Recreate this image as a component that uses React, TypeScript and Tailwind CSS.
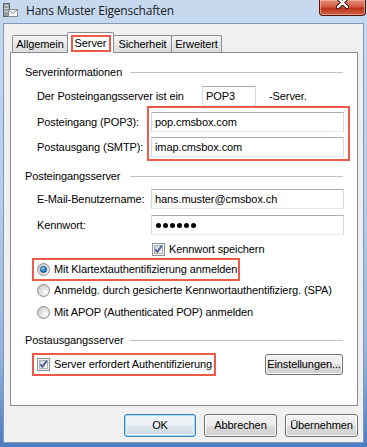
import type { ReactNode } from 'react';

const boxBorder =
  'border border-[#abadb3] border-l-[#d5d8df] border-r-[#d5d8df] border-b-[#e3e9ef] bg-white';

const btnClass =
  'flex items-center justify-center rounded-[3px] border border-[#707070] bg-[linear-gradient(to_bottom,#f2f2f2_0%,#ebebeb_50%,#dddddd_50%,#cfcfcf_100%)] shadow-[inset_0_0_0_1px_#fcfcfc]';

const red = 'border-2 border-[#ec5b47]';

function TitleIcon() {
  return (
    <svg width="16" height="16" viewBox="0 0 16 16">
      <rect x="1.5" y="1.5" width="6" height="13" fill="#9a9da2" stroke="#5f6267" />
      <rect x="2.5" y="3" width="4" height="1" fill="#d8dadd" />
      <rect x="2.5" y="6" width="4" height="1" fill="#d8dadd" />
      <rect x="2.5" y="9" width="4" height="1" fill="#d8dadd" />
      <rect x="6.5" y="7.5" width="9" height="7" fill="#f6f6f6" stroke="#8a8c90" />
      <path d="M6.5 7.5 L11 11.5 L15.5 7.5" fill="none" stroke="#8a8c90" />
    </svg>
  );
}

function CloseButton() {
  return (
    <div className="ml-auto mr-[1px] self-start w-[47px] h-[16px] rounded-b-[4px] border border-t-0 border-[#4f1509] bg-[linear-gradient(to_bottom,#e2907c_0%,#d25a40_45%,#bb3119_55%,#d0644a_100%)] shadow-[inset_0_0_0_1px_rgba(255,190,170,0.6)] flex justify-center">
      <svg width="13" height="9" viewBox="0 4 13 9">
        <path d="M2 2 L11 11 M11 2 L2 11" stroke="#3a1a14" strokeWidth="4.4" strokeLinecap="round" />
        <path d="M2 2 L11 11 M11 2 L2 11" stroke="#ffffff" strokeWidth="2.4" strokeLinecap="round" />
      </svg>
    </div>
  );
}

function Tab({ width, first, children }: { width: string; first?: boolean; children: ReactNode }) {
  return (
    <div
      className={`${width} ${first ? '' : '-ml-px'} h-[17px] border border-b-0 border-[#898c95] rounded-t-[2px] bg-[linear-gradient(to_bottom,#f5f5f5,#dcdcdc)] flex items-center justify-center`}
    >
      {children}
    </div>
  );
}

function GroupHeader({ title, className = '' }: { title: string; className?: string }) {
  return (
    <div className={`flex items-center h-[16px] pl-[14px] pr-[14px] ${className}`}>
      <span className="w-[105px] shrink-0">{title}</span>
      <div className="flex-1 h-px bg-[#bcc4cc]" />
    </div>
  );
}

function TextBox({ children, width = 'w-[193px]' }: { children: ReactNode; width?: string }) {
  return <div className={`${width} h-[20px] ${boxBorder} flex items-center pl-[3px]`}>{children}</div>;
}

function CheckBox() {
  return (
    <svg width="13" height="13" viewBox="0 0 13 13" className="shrink-0">
      <defs>
        <linearGradient id="cbg" x1="0" y1="0" x2="1" y2="1">
          <stop offset="0" stopColor="#c9cdd3" />
          <stop offset="1" stopColor="#f8f8f8" />
        </linearGradient>
      </defs>
      <rect x="0.5" y="0.5" width="12" height="12" fill="#f4f4f4" stroke="#8e8f8f" />
      <rect x="2.5" y="2.5" width="8" height="8" fill="url(#cbg)" stroke="#aeb2b8" />
      <path d="M3.2 6.4 L5.4 8.8 L9.8 2.8" fill="none" stroke="#4a5f97" strokeWidth="1.9" />
    </svg>
  );
}

function Radio({ checked }: { checked?: boolean }) {
  return (
    <svg width="13" height="13" viewBox="0 0 13 13" className="shrink-0">
      <defs>
        <radialGradient id="rbg" cx="0.65" cy="0.65" r="0.7">
          <stop offset="0" stopColor="#ffffff" />
          <stop offset="1" stopColor="#c8c8c8" />
        </radialGradient>
        <radialGradient id="rdot" cx="0.4" cy="0.35" r="0.7">
          <stop offset="0" stopColor="#8fd1fb" />
          <stop offset="0.6" stopColor="#2d7dc3" />
          <stop offset="1" stopColor="#0f3f78" />
        </radialGradient>
      </defs>
      <circle cx="6.5" cy="6.5" r="6" fill="url(#rbg)" stroke="#8e8f8f" />
      {checked && <circle cx="6.5" cy="6.5" r="3.2" fill="url(#rdot)" stroke="#1c4e85" strokeWidth="0.6" />}
    </svg>
  );
}

export default function App() {
  return (
    <div className="w-[367px] h-[447px] flex flex-col overflow-hidden bg-[linear-gradient(to_bottom,#c6d9ef_0%,#b7cde8_45%,#93b2dc_80%,#4c7bc1_100%)] font-['Liberation_Sans',Arial,sans-serif] text-[11px] tracking-[-0.1px] text-black leading-none">
      {/* title bar */}
      <div className="h-[23px] flex shrink-0">
        <div className="pl-[2px] pt-[2px]">
          <TitleIcon />
        </div>
        <span className="ml-[8px] mt-[5px] h-fit font-['Open_Sans',sans-serif] text-[12px] tracking-[-0.2px] text-[#1b1b1b]">
          Hans Muster Eigenschaften
        </span>
        <CloseButton />
      </div>

      {/* client area */}
      <div className="mx-[3px] h-[420px] shrink-0 border border-[#7f98bb] bg-[#f0f0f0] flex flex-col">
        {/* tabs */}
        <div className="mt-[8px] h-[20px] shrink-0 flex items-end pl-[8px]">
          <Tab width="w-[56px]" first>
            Allgemein
          </Tab>
          <div className="relative z-10 -ml-px -mb-px w-[47px] h-[21px] bg-white border border-b-0 border-[#898c95] rounded-t-[2px] flex justify-center pt-[2px]">
            <span className={`w-[40px] h-[17px] ${red} flex items-center justify-center`}>Server</span>
          </div>
          <Tab width="w-[59px]">Sicherheit</Tab>
          <Tab width="w-[51px]">Erweitert</Tab>
        </div>

        {/* panel */}
        <div className="ml-[6px] mr-[5px] h-[354px] shrink-0 border border-[#898c95] bg-white flex flex-col">
          <GroupHeader title="Serverinformationen" className="mt-[11px]" />

          <div className="mt-[6px] flex items-center h-[20px] pl-[26px]">
            <span className="w-[165px]">Der Posteingangsserver ist ein</span>
            <TextBox width="w-[54px]">POP3</TextBox>
            <span className="ml-[13px]">-Server.</span>
          </div>

          <div className="flex pl-[26px]">
            <div className="w-[110px] flex flex-col pt-[6px] gap-[5px]">
              <div className="h-[20px] flex items-center">Posteingang (POP3):</div>
              <div className="h-[20px] flex items-center">Postausgang (SMTP):</div>
            </div>
            <div className={`${red} pt-[4px] pb-[2px] pl-[2px] pr-[4px] flex flex-col gap-[5px]`}>
              <TextBox>pop.cmsbox.com</TextBox>
              <TextBox>imap.cmsbox.com</TextBox>
            </div>
          </div>

          <GroupHeader title="Posteingangsserver" className="mt-[7px]" />

          <div className="mt-[5px] flex items-center pl-[26px]">
            <span className="w-[114px]">E-Mail-Benutzername:</span>
            <TextBox>hans.muster@cmsbox.ch</TextBox>
          </div>

          <div className="mt-[6px] flex items-center pl-[26px]">
            <span className="w-[114px]">Kennwort:</span>
            <TextBox>
              <div className="flex gap-[2px] pl-px">
                {[0, 1, 2, 3, 4, 5].map((i) => (
                  <span key={i} className="w-[5px] h-[5px] rounded-full bg-black" />
                ))}
              </div>
            </TextBox>
          </div>

          <div className="mt-[8px] h-[13px] flex items-center pl-[141px]">
            <CheckBox />
            <span className="ml-[4px]">Kennwort speichern</span>
          </div>

          <div className={`mt-[2px] ml-[21px] w-[208px] h-[23px] ${red} flex items-center pl-[3px]`}>
            <Radio checked />
            <span className="ml-[4px]">Mit Klartextauthentifizierung anmelden</span>
          </div>

          <div className="mt-[1px] h-[16px] flex items-center pl-[26px]">
            <Radio />
            <span className="ml-[4px]">Anmeldg. durch gesicherte Kennwortauthentifizierg. (SPA)</span>
          </div>

          <div className="mt-[6px] h-[16px] flex items-center pl-[26px]">
            <Radio />
            <span className="ml-[4px]">Mit APOP (Authenticated POP) anmelden</span>
          </div>

          <GroupHeader title="Postausgangsserver" className="mt-[12px]" />

          <div className="mt-[5px] flex items-center pr-[14px]">
            <div className={`ml-[21px] w-[184px] h-[23px] ${red} flex items-center pl-[3px]`}>
              <CheckBox />
              <span className="ml-[4px]">Server erfordert Authentifizierung</span>
            </div>
            <div className={`ml-auto w-[78px] h-[21px] ${btnClass}`}>Einstellungen...</div>
          </div>
        </div>

        {/* dialog buttons */}
        <div className="mt-[8px] mr-[5px] flex justify-end gap-[8px]">
          <div className="w-[72px] h-[23px] flex items-center justify-center rounded-[3px] border border-[#3c7fb1] bg-[linear-gradient(to_bottom,#f2f6f9_0%,#eaeff3_50%,#dde4ea_50%,#d0d9e1_100%)] shadow-[inset_0_0_0_1px_#9ddcf8,inset_0_0_0_2px_#e6f6fd]">
            OK
          </div>
          <div className={`w-[73px] h-[23px] ${btnClass}`}>Abbrechen</div>
          <div className={`w-[73px] h-[23px] ${btnClass}`}>Übernehmen</div>
        </div>
      </div>
    </div>
  );
}
